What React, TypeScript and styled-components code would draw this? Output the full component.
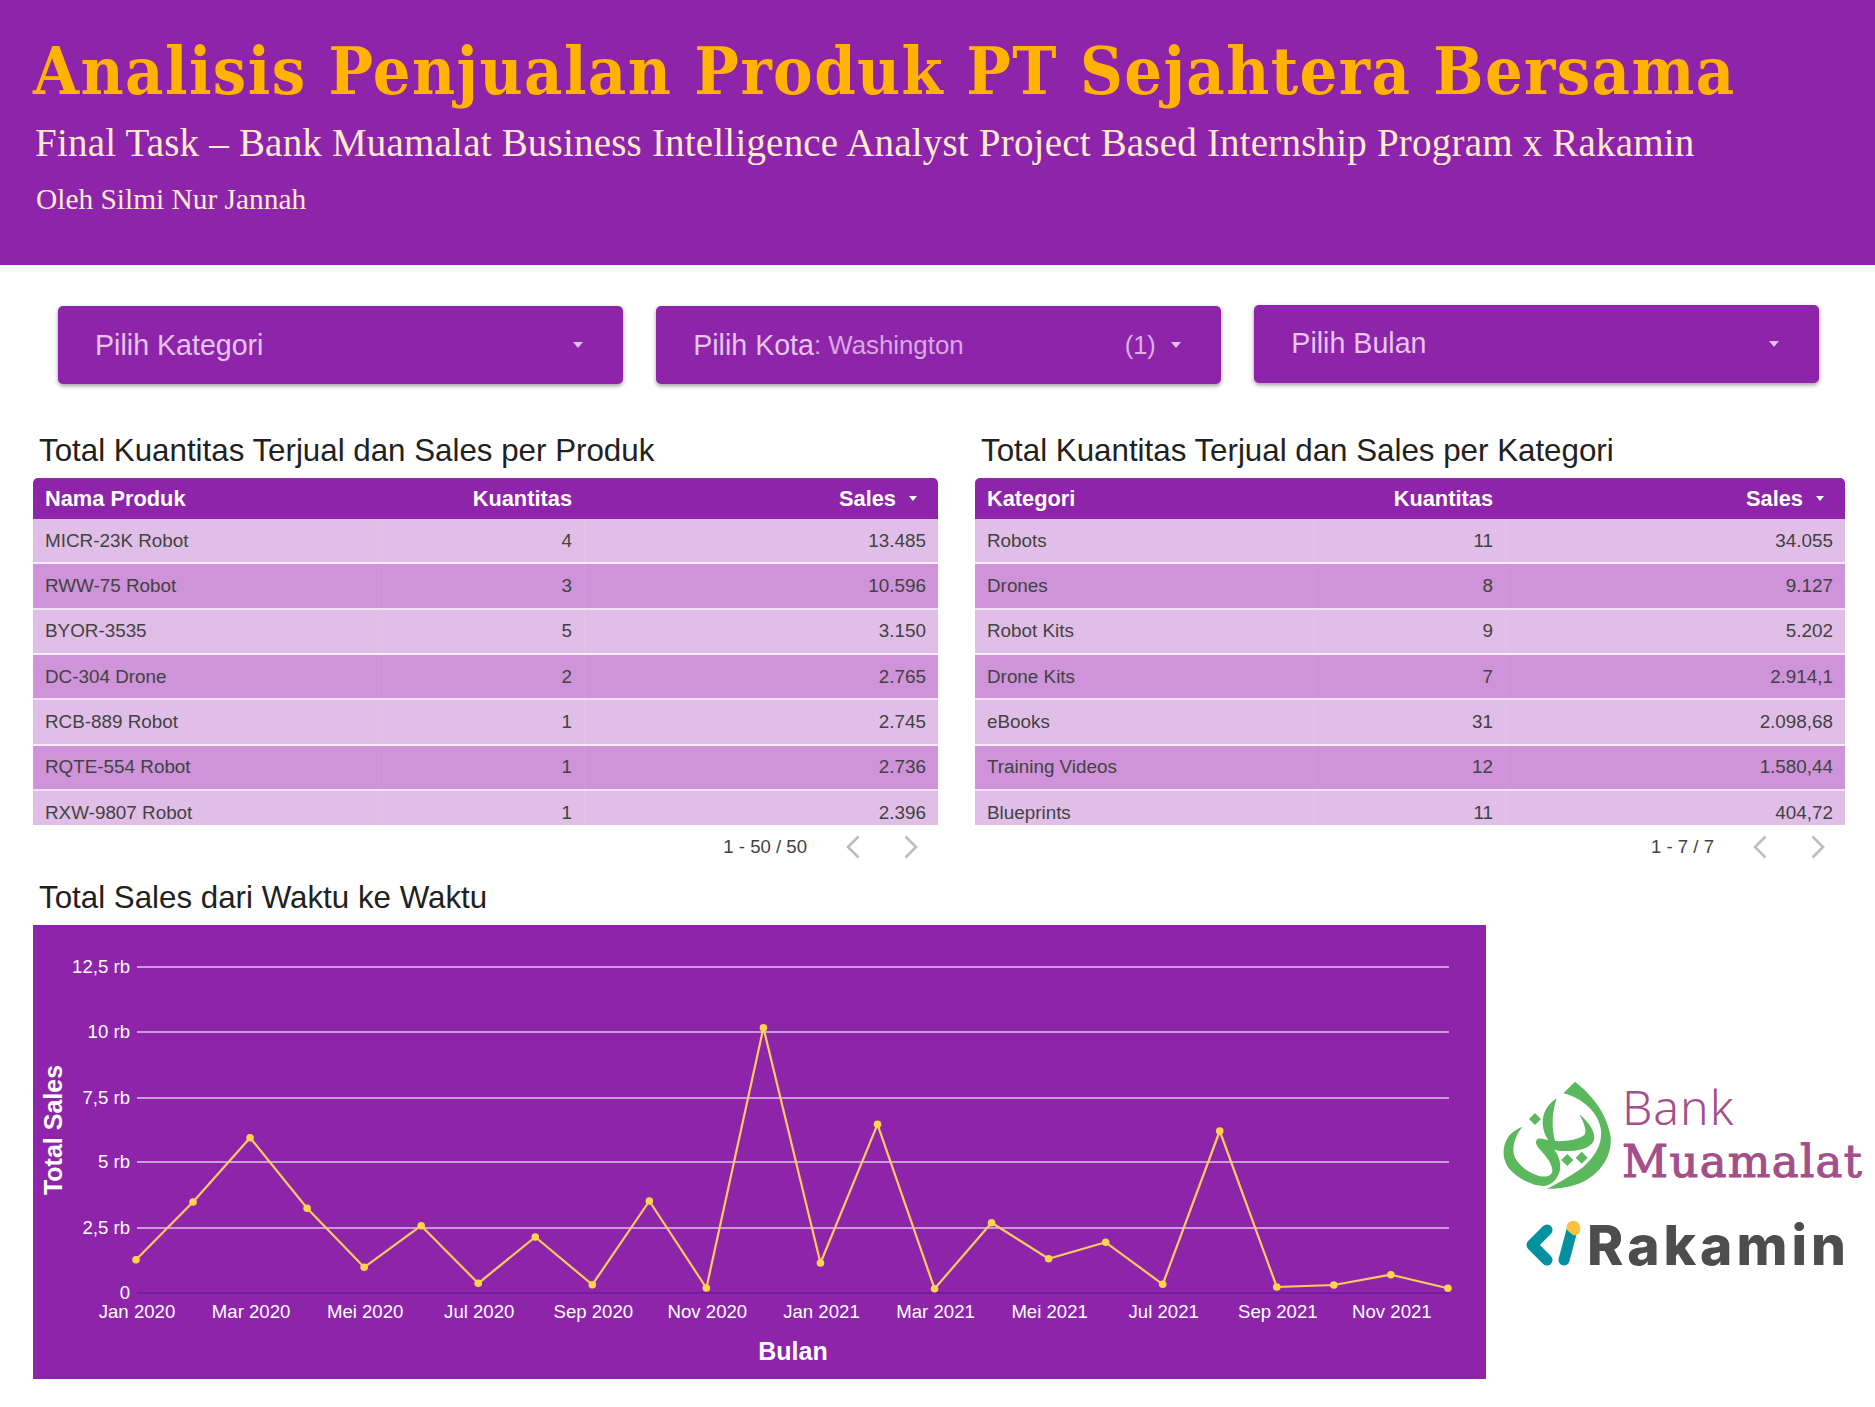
import React from 'react';
import styled, { createGlobalStyle } from 'styled-components';

const Global = createGlobalStyle`
  html, body { margin: 0; padding: 0; background: #fff; }
  * { box-sizing: border-box; }
`;
const PURPLE = '#8e24aa';
const Page = styled.div`
  width: 1875px; height: 1407px; overflow: hidden;
  font-family: "Liberation Sans", Arial, sans-serif; background: #fff;
`;
const Header = styled.header`
  height: 265px; background: ${PURPLE}; padding: 33px 0 0 33px;
  font-family: "Liberation Serif", Georgia, serif;
`;
const Title = styled.h1`
  margin: 0; font-family: "DejaVu Serif Condensed", "DejaVu Serif", serif; font-stretch: condensed;
  font-size: 66px; line-height: 76px; font-weight: 700; color: #ffb300; white-space: nowrap; letter-spacing: 1.4px;
`;
const Subtitle = styled.div`
  margin: 12px 0 0 2px; font-size: 39px; line-height: 44px; color: #ffeccf; letter-spacing: .2px;
`;
const Author = styled.div`
  margin: 17px 0 0 3px; font-size: 29.4px; line-height: 34px; color: #ffeccf;
`;
const Filters = styled.div`
  display: grid; grid-template-columns: repeat(3, 1fr); column-gap: 33.5px;
  margin: 41px 56px 0 58px; align-items: start;
`;
const Filter = styled.div<{ $raised?: boolean }>`
  height: 78px; background: ${PURPLE}; border-radius: 5px; display: flex; align-items: center;
  padding: 0 40px 0 37px; box-shadow: 0 2px 4px rgba(0,0,0,.38);
  margin-top: ${p => (p.$raised ? '-1.5px' : '0')};
  color: #e6c5ee; font-size: 28.6px;
`;
const FilterLabel = styled.span`white-space: nowrap;`;
const FilterValue = styled.span`font-size: 25.8px; color: #d9a8e4; white-space: nowrap;`;
const FilterCount = styled.span`margin-left: auto; font-size: 25.4px; color: #dcb2e6;`;
const FilterArrow = styled.i<{ $after?: boolean }>`
  display: block; width: 0; height: 0; border-left: 5.5px solid transparent; border-right: 5.5px solid transparent;
  border-top: 6px solid #e1bee7; margin-left: ${p => (p.$after ? '15px' : 'auto')};
`;
const Tables = styled.div`
  display: grid; grid-template-columns: 905px 870px; column-gap: 37px; padding-left: 33px; margin-top: 47px;
`;
const Section = styled.section``;
const SectionTitle = styled.h2`
  margin: 0 0 7px 6px; font-size: 31.3px; line-height: 40px; font-weight: 400; color: #212121;
`;
const TableBox = styled.div`
  height: 347px; overflow: hidden; border-radius: 5px 5px 0 0;
`;
const Row = styled.div<{ $cols: string; $tone: 'head' | 'light' | 'dark' }>`
  display: grid; grid-template-columns: ${p => p.$cols};
  height: ${p => (p.$tone === 'head' ? '41px' : '45.33px')};
  background: ${p => (p.$tone === 'head' ? PURPLE : p.$tone === 'light' ? '#e1bee7' : '#ce93d8')};
  color: ${p => (p.$tone === 'head' ? '#fff' : '#424242')};
  font-size: ${p => (p.$tone === 'head' ? '21.8px' : '18.85px')};
  font-weight: ${p => (p.$tone === 'head' ? 700 : 400)};
  border-bottom: ${p => (p.$tone === 'head' ? '0' : '2px solid rgba(255,255,255,.72)')};
`;
const Cell = styled.div<{ $right?: boolean }>`
  display: flex; align-items: center; padding: 0 12px; white-space: nowrap;
  justify-content: ${p => (p.$right ? 'flex-end' : 'flex-start')};
`;
const BodyCell = styled(Cell)`
  & + & { border-left: 1px solid rgba(255,255,255,.08); }
`;
const SortArrow = styled.i`
  display: block; width: 0; height: 0; margin: 0 9px 0 13px;
  border-left: 4.5px solid transparent; border-right: 4.5px solid transparent; border-top: 5px solid #fff;
`;
const Pager = styled.div`
  height: 44px; display: flex; align-items: center; justify-content: flex-end; padding-right: 20px;
  font-size: 18.6px; color: #424242;
`;
const PagerText = styled.span`margin-right: 39px;`;
const PagerIcon = styled.svg`
  width: 14px; height: 24px; display: block; fill: none; stroke: #bdbdbd; stroke-width: 2.6;
  & + & { margin-left: 44px; }
`;
const ChartHeading = styled(SectionTitle)`margin: 9px 0 7px 39px;`;
const Bottom = styled.div`display: flex; padding-left: 33px;`;
const ChartBox = styled.div`width: 1453px; height: 454px; background: ${PURPLE}; flex: none;`;
const ChartSvg = styled.svg`display: block;`;
const Logos = styled.div`padding: 150px 0 0 9px; flex: none;`;
const BankLogo = styled.div`display: flex; height: 125px;`;
const BankMark = styled.svg`width: 127px; height: 125px; flex: none;`;
const BankText = styled.div`
  color: #a3508a; display: flex; flex-direction: column; padding-top: 6px;
`;
const BankTop = styled.span`
  font-family: "Noto Sans", sans-serif; font-weight: 300; font-size: 48px; line-height: 52px; letter-spacing: 1px;
`;
const BankBottom = styled.span`
  font-family: "DejaVu Serif", serif; font-weight: 400; font-size: 45px; line-height: 58px; letter-spacing: 1.3px;
  -webkit-text-stroke: 1.1px #a3508a;
`;
const RakaminLogo = styled.div`display: flex; align-items: center; height: 70px; margin: 10px 0 0 25px;`;
const RakaminMark = styled.svg`width: 67px; height: 70px; flex: none;`;
const RakaminText = styled.span`
  font-family: Inter, sans-serif; font-weight: 800; font-size: 55px; line-height: 70px; color: #4d4d4d; letter-spacing: 4px;
`;

const products = [['MICR-23K Robot','4','13.485'],['RWW-75 Robot','3','10.596'],['BYOR-3535','5','3.150'],['DC-304 Drone','2','2.765'],['RCB-889 Robot','1','2.745'],['RQTE-554 Robot','1','2.736'],['RXW-9807 Robot','1','2.396']];
const categories = [['Robots','11','34.055'],['Drones','8','9.127'],['Robot Kits','9','5.202'],['Drone Kits','7','2.914,1'],['eBooks','31','2.098,68'],['Training Videos','12','1.580,44'],['Blueprints','11','404,72']];

function DataTable({ first, cols, rows, pager }: { first: string; cols: string; rows: string[][]; pager: string }) {
  return (
    <>
      <TableBox>
        <Row $cols={cols} $tone="head">
          <Cell>{first}</Cell>
          <Cell $right>Kuantitas</Cell>
          <Cell $right>Sales<SortArrow /></Cell>
        </Row>
        {rows.map((r, i) => (
          <Row key={r[0]} $cols={cols} $tone={i % 2 ? 'dark' : 'light'}>
            <BodyCell>{r[0]}</BodyCell>
            <BodyCell $right>{r[1]}</BodyCell>
            <BodyCell $right>{r[2]}</BodyCell>
          </Row>
        ))}
      </TableBox>
      <Pager>
        <PagerText>{pager}</PagerText>
        <PagerIcon viewBox="0 0 14 24"><path d="M12.5 1.5 2 12l10.5 10.5" /></PagerIcon>
        <PagerIcon viewBox="0 0 14 24"><path d="M1.5 1.5 12 12 1.5 22.5" /></PagerIcon>
      </Pager>
    </>
  );
}

const ys = [1259.7,1202,1137.7,1208.3,1267.3,1225.7,1283.3,1237,1284.7,1201,1288,1027.7,1263,1124.3,1288.7,1222.7,1258.7,1242.3,1284.3,1131,1287,1285,1274.7,1288.3];
const pts = ys.map((y, i) => [103 + i * 57.04, y - 925]);
const grid = [['12,5 rb',42],['10 rb',107],['7,5 rb',173],['5 rb',237],['2,5 rb',303]] as [string, number][];
const months = ['Jan 2020','Mar 2020','Mei 2020','Jul 2020','Sep 2020','Nov 2020','Jan 2021','Mar 2021','Mei 2021','Jul 2021','Sep 2021','Nov 2021'];

function Chart() {
  return (
    <ChartSvg width={1453} height={454} viewBox="0 0 1453 454" fontFamily="Liberation Sans, Arial, sans-serif">
      {grid.map(([l, y]) => (
        <g key={l}>
          <line x1={104} x2={1416} y1={y} y2={y} stroke="#fff" strokeOpacity={0.72} strokeWidth={1.3} />
          <text x={97} y={y + 5.5} fill="#fff" fontSize={18.6} textAnchor="end">{l}</text>
        </g>
      ))}
      <line x1={104} x2={1416} y1={368} y2={368} stroke="#6a1b9a" strokeWidth={1.3} />
      <text x={97} y={374} fill="#fff" fontSize={18.6} textAnchor="end">0</text>
      {months.map((m, i) => (
        <text key={m} x={104 + i * 114.08} y={393} fill="#fff" fontSize={18.6} textAnchor="middle">{m}</text>
      ))}
      <polyline points={pts.map(p => p.join(',')).join(' ')} fill="none" stroke="#ffca5f" strokeWidth={2.2} strokeLinejoin="round" />
      {pts.map((p, i) => <circle key={i} cx={p[0]} cy={p[1]} r={3.8} fill="#ffd54f" />)}
      <text x={760} y={435} fill="#fff" fontSize={25} fontWeight={700} textAnchor="middle">Bulan</text>
      <text transform="translate(29 205) rotate(-90)" fill="#fff" fontSize={25} fontWeight={700} textAnchor="middle">Total Sales</text>
    </ChartSvg>
  );
}

export default function App() {
  const c1 = '345px 206px 1fr';
  const c2 = '338px 192px 1fr';
  return (
    <Page>
      <Global />
      <Header>
        <Title>Analisis Penjualan Produk PT Sejahtera Bersama</Title>
        <Subtitle>Final Task – Bank Muamalat Business Intelligence Analyst Project Based Internship Program x Rakamin</Subtitle>
        <Author>Oleh Silmi Nur Jannah</Author>
      </Header>
      <Filters>
        <Filter><FilterLabel>Pilih Kategori</FilterLabel><FilterArrow /></Filter>
        <Filter>
          <FilterLabel>Pilih Kota</FilterLabel><FilterValue>: Washington</FilterValue>
          <FilterCount>(1)</FilterCount><FilterArrow $after />
        </Filter>
        <Filter $raised><FilterLabel>Pilih Bulan</FilterLabel><FilterArrow /></Filter>
      </Filters>
      <Tables>
        <Section>
          <SectionTitle>Total Kuantitas Terjual dan Sales per Produk</SectionTitle>
          <DataTable first="Nama Produk" cols={c1} rows={products} pager="1 - 50 / 50" />
        </Section>
        <Section>
          <SectionTitle>Total Kuantitas Terjual dan Sales per Kategori</SectionTitle>
          <DataTable first="Kategori" cols={c2} rows={categories} pager="1 - 7 / 7" />
        </Section>
      </Tables>
      <ChartHeading>Total Sales dari Waktu ke Waktu</ChartHeading>
      <Bottom>
        <ChartBox><Chart /></ChartBox>
        <Logos>
          <BankLogo>
            <BankMark viewBox="0 0 381 375">
              <g fill="#5cb85c">
                <path d="M240 20C285 55 335 110 347 185C352 250 310 300 255 325C220 338 185 342 155 342C185 325 225 305 262 278C300 245 322 210 318 165C312 115 265 70 205 55Z" />
                <path d="M185 70C155 90 143 115 143 145C144 165 150 182 160 196C150 194 138 188 128 192C120 198 122 208 130 218C145 235 170 260 172 285C172 305 150 308 130 302C90 290 60 260 56 235C52 205 65 175 83 155C68 160 52 170 42 182C22 210 20 245 38 275C60 305 110 335 150 333C170 330 190 310 195 285C198 260 190 240 178 224C185 226 195 228 205 228C240 230 282 222 295 200C305 175 285 145 253 118C262 135 278 165 268 180C250 195 210 200 180 198C170 160 170 115 185 70Z" />
                <path d="M120 114l18 18-18 18-18-18Z" />
                <path d="M217 237l18 18-18 18-18-18Z" />
                <path d="M260 230l18 18-18 18-18-18Z" />
              </g>
            </BankMark>
            <BankText>
              <BankTop>Bank</BankTop>
              <BankBottom>Muamalat</BankBottom>
            </BankText>
          </BankLogo>
          <RakaminLogo>
            <RakaminMark viewBox="0 0 67 70">
              <path d="M27 20 12 35l15 15" fill="none" stroke="#04919f" strokeWidth={11} strokeLinecap="round" strokeLinejoin="round" />
              <path d="M52 20 44 50" fill="none" stroke="#04919f" strokeWidth={11} strokeLinecap="round" />
              <path d="M47 20C45 14 50 10 55 11C59 12 61 17 60 21C59 25 55 26 53 25Z" fill="#fbc13f" />
            </RakaminMark>
            <RakaminText>Rakamin</RakaminText>
          </RakaminLogo>
        </Logos>
      </Bottom>
    </Page>
  );
}
